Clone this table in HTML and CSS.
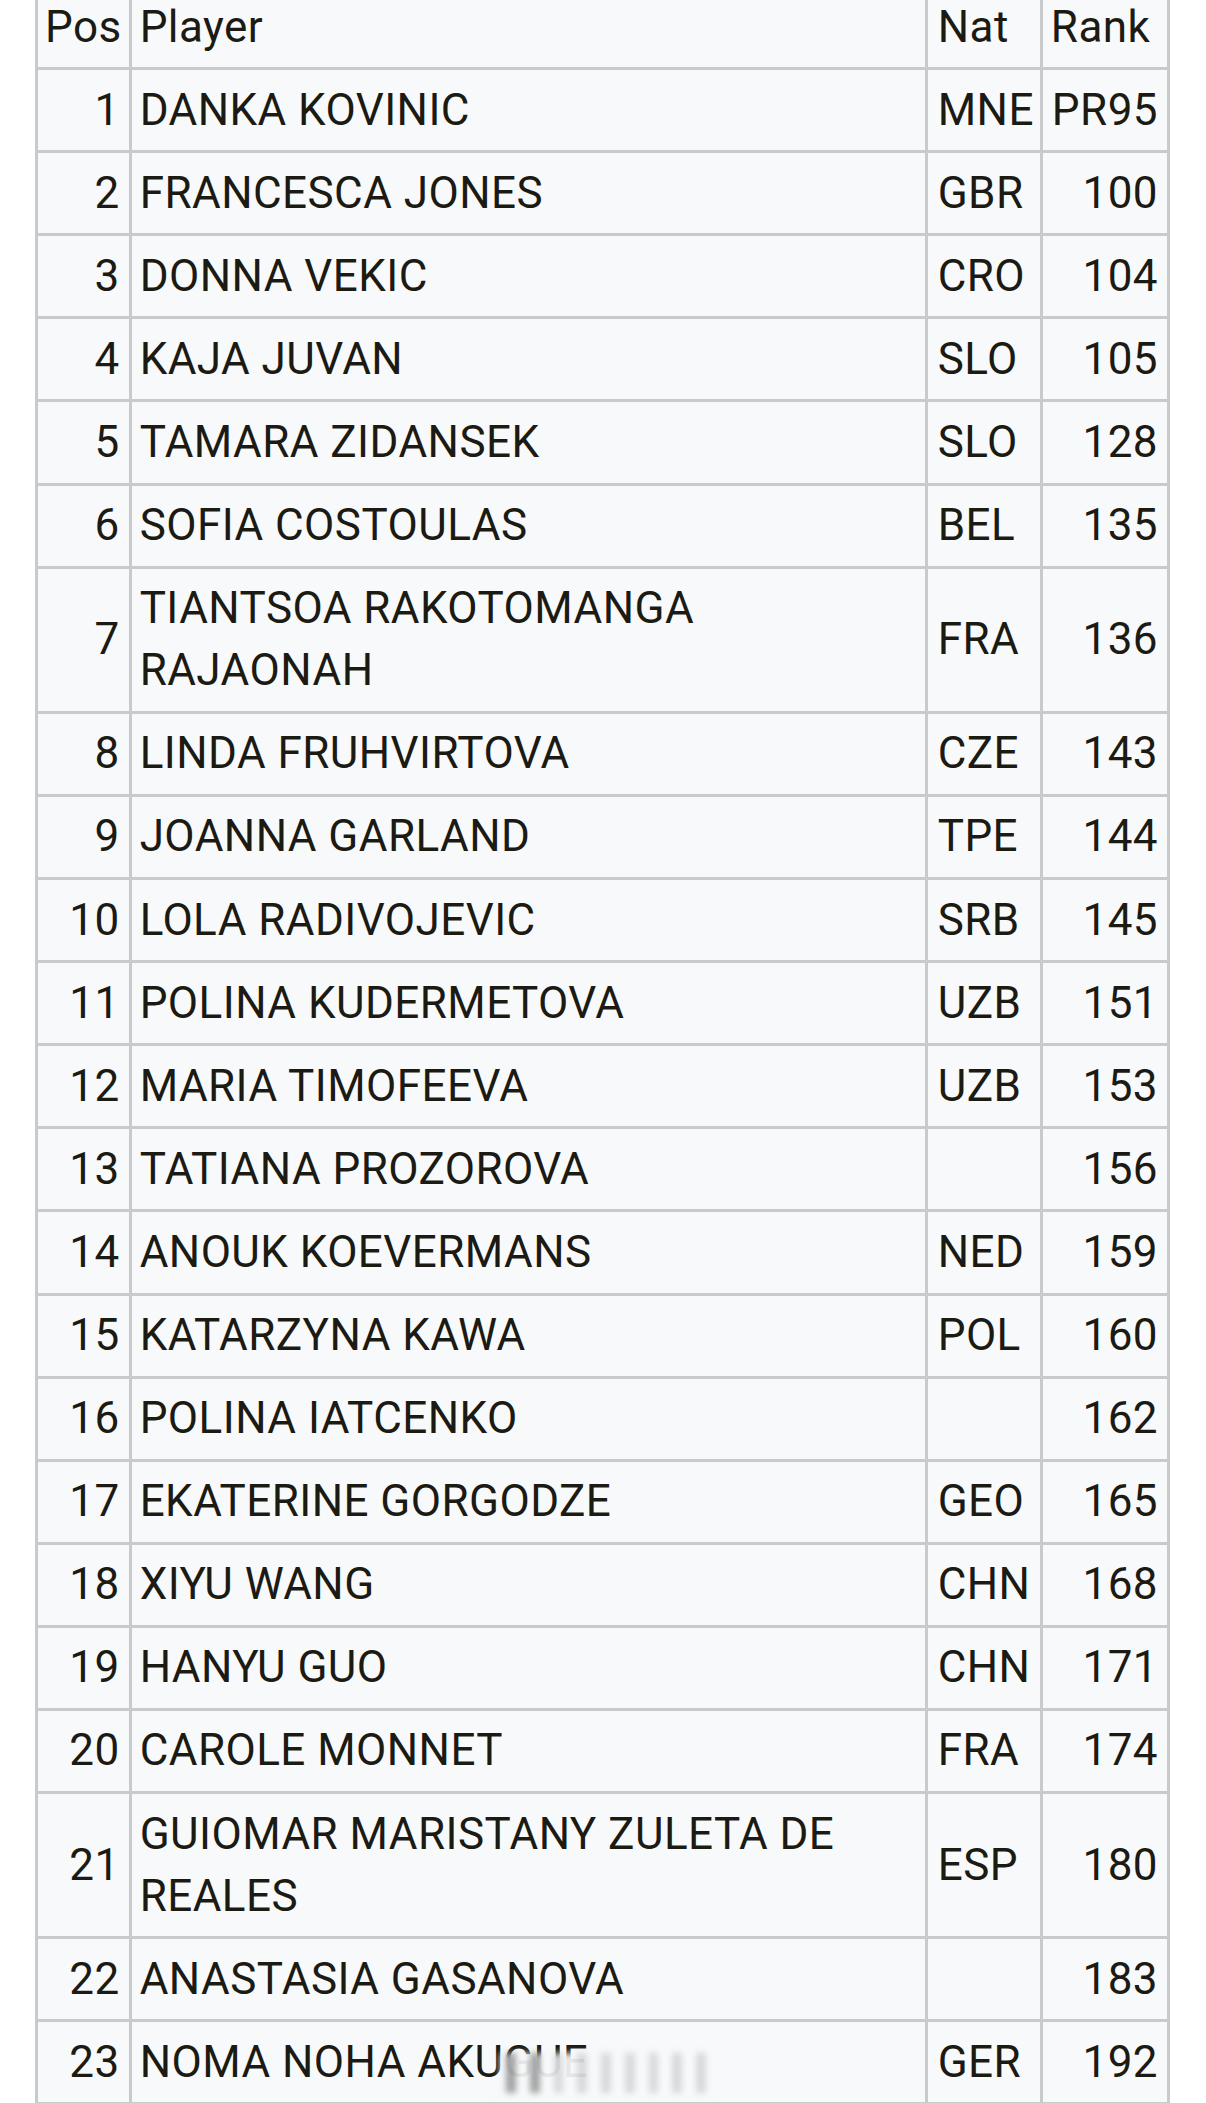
FILE: index.html
```html
<!DOCTYPE html>
<html lang="en">
<head>
<meta charset="utf-8">
<title>Entry list</title>
<link rel="stylesheet" href="styles.css">
</head>
<body>
<table class="entry-table">
  <thead>
    <tr><th class="pos">Pos</th><th class="player">Player</th><th class="nat">Nat</th><th class="rank">Rank</th></tr>
  </thead>
  <tbody>
    <tr><td class="num">1</td><td>DANKA KOVINIC</td><td>MNE</td><td class="num">PR95</td></tr>
    <tr><td class="num">2</td><td>FRANCESCA JONES</td><td>GBR</td><td class="num">100</td></tr>
    <tr><td class="num">3</td><td>DONNA VEKIC</td><td>CRO</td><td class="num">104</td></tr>
    <tr><td class="num">4</td><td>KAJA JUVAN</td><td>SLO</td><td class="num">105</td></tr>
    <tr><td class="num">5</td><td>TAMARA ZIDANSEK</td><td>SLO</td><td class="num">128</td></tr>
    <tr><td class="num">6</td><td>SOFIA COSTOULAS</td><td>BEL</td><td class="num">135</td></tr>
    <tr><td class="num">7</td><td>TIANTSOA RAKOTOMANGA<br>RAJAONAH</td><td>FRA</td><td class="num">136</td></tr>
    <tr><td class="num">8</td><td>LINDA FRUHVIRTOVA</td><td>CZE</td><td class="num">143</td></tr>
    <tr><td class="num">9</td><td>JOANNA GARLAND</td><td>TPE</td><td class="num">144</td></tr>
    <tr><td class="num">10</td><td>LOLA RADIVOJEVIC</td><td>SRB</td><td class="num">145</td></tr>
    <tr><td class="num">11</td><td>POLINA KUDERMETOVA</td><td>UZB</td><td class="num">151</td></tr>
    <tr><td class="num">12</td><td>MARIA TIMOFEEVA</td><td>UZB</td><td class="num">153</td></tr>
    <tr><td class="num">13</td><td>TATIANA PROZOROVA</td><td></td><td class="num">156</td></tr>
    <tr><td class="num">14</td><td>ANOUK KOEVERMANS</td><td>NED</td><td class="num">159</td></tr>
    <tr><td class="num">15</td><td>KATARZYNA KAWA</td><td>POL</td><td class="num">160</td></tr>
    <tr><td class="num">16</td><td>POLINA IATCENKO</td><td></td><td class="num">162</td></tr>
    <tr><td class="num">17</td><td>EKATERINE GORGODZE</td><td>GEO</td><td class="num">165</td></tr>
    <tr><td class="num">18</td><td>XIYU WANG</td><td>CHN</td><td class="num">168</td></tr>
    <tr><td class="num">19</td><td>HANYU GUO</td><td>CHN</td><td class="num">171</td></tr>
    <tr><td class="num">20</td><td>CAROLE MONNET</td><td>FRA</td><td class="num">174</td></tr>
    <tr><td class="num">21</td><td>GUIOMAR MARISTANY ZULETA DE<br>REALES</td><td>ESP</td><td class="num">180</td></tr>
    <tr><td class="num">22</td><td>ANASTASIA GASANOVA</td><td></td><td class="num">183</td></tr>
    <tr><td class="num">23</td><td>NOMA NOHA AKUGUE</td><td>GER</td><td class="num">192</td></tr>
  </tbody>
</table>
<div class="watermark" aria-hidden="true">
  <span></span><span></span><span></span><span></span><span></span><span></span><span></span><span></span><span></span>
</div>
</body>
</html>
```
FILE: styles.css
```css
html, body {
  margin: 0;
  padding: 0;
  background: #ffffff;
}

body {
  position: relative;
  font-family: Roboto, "Noto Sans", "Liberation Sans", sans-serif;
  color: #1b1a13;
  overflow: hidden;
}

.entry-table {
  border-collapse: collapse;
  margin: -16px 0 0 35px;
  width: 1135px;
  background: #f8f9fa;
  font-size: 44px;
  line-height: 62.1px;
  letter-spacing: 0.45px;
}

.entry-table th,
.entry-table td {
  border: 3px solid #c8cacc;
  padding: 8.5px 9px 9.5px 9px;
  vertical-align: middle;
  text-align: left;
  font-weight: 400;
  white-space: nowrap;
}

.entry-table th.pos {
  padding-left: 7px;
  padding-right: 7px;
}

.entry-table th.player {
  width: 100%;
  padding-left: 8px;
}

.entry-table td:nth-child(2) {
  padding-left: 8px;
}

.entry-table th.nat,
.entry-table td:nth-child(3) {
  padding-left: 10px;
  padding-right: 6px;
}

.entry-table th.rank {
  padding-left: 8px;
  padding-right: 8px;
}

.entry-table td.num {
  text-align: right;
}

.watermark {
  position: absolute;
  left: 500px;
  top: 2053px;
  width: 200px;
  height: 40px;
  display: flex;
  gap: 14px;
  align-items: stretch;
  padding: 0 6px;
  background: rgba(248, 249, 250, 0.93);
  filter: blur(3px);
}

.watermark span {
  flex: 1;
  background: rgba(140, 140, 140, 0.3);
}

.watermark span:nth-child(1),
.watermark span:nth-child(2) {
  background: rgba(50, 50, 50, 0.45);
}
```
